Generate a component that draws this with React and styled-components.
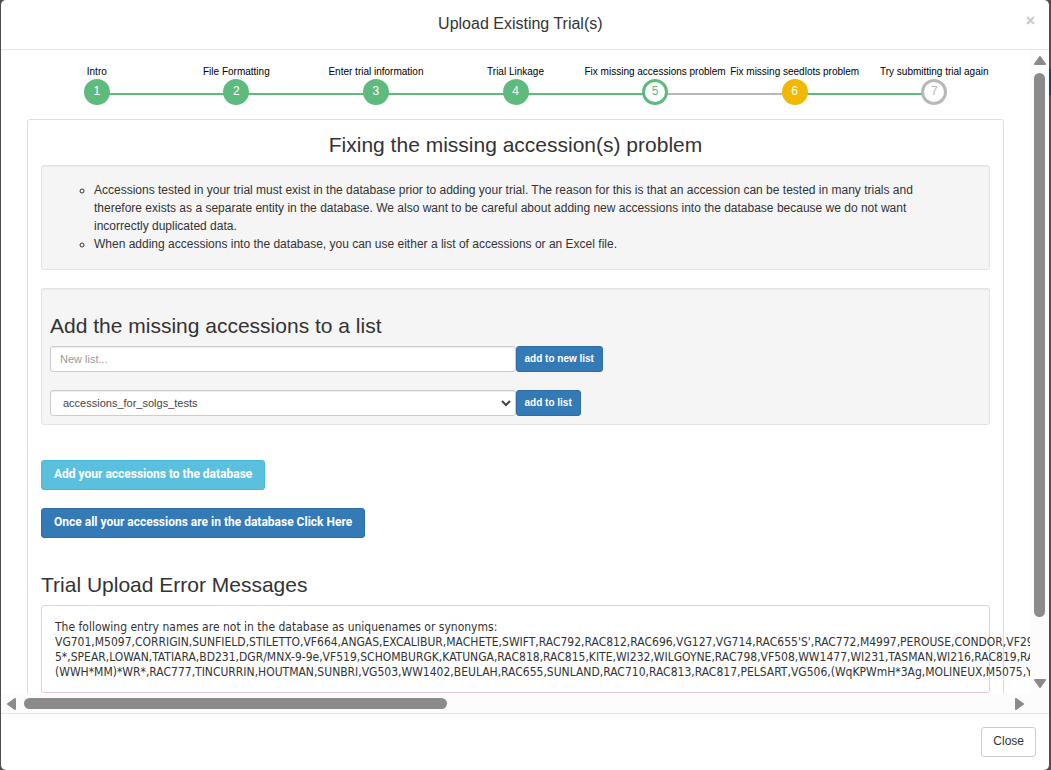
import React, { useId } from "react";
import styled, { createGlobalStyle } from "styled-components";

const GlobalStyle = createGlobalStyle`
  *, *::before, *::after { box-sizing: border-box; }
  body {
    margin: 0;
    background: #505052;
    color: #333;
    font: 12px/18px "Liberation Sans", Arial, sans-serif;
  }
`;

const Backdrop = styled.div`
  display: flex;
  height: 100vh;
  padding: 0 2px 0 1px;
  background:
    linear-gradient(#0b4377, #0b4377) right 69px / 2px 26px no-repeat,
    #505052;
`;

const Dialog = styled.section`
  display: flex;
  flex: 1;
  flex-direction: column;
  min-width: 0;
  background: #fff;
  border-radius: 5px;
  overflow: hidden;
`;

const Header = styled.header`
  display: flex;
  align-items: center;
  height: 50px;
  padding: 0 14px 2px;
  border-bottom: 1px solid #e5e5e5;
`;

const Title = styled.h1`
  flex: 1;
  margin: 0;
  font-size: 16px;
  font-weight: 400;
  line-height: 24px;
  text-align: center;
`;

const Dismiss = styled.button`
  padding: 0 0 5px;
  border: 0;
  background: none;
  color: #c8c8c8;
  font: bold 16px/18px "Liberation Sans", Arial, sans-serif;
`;

const Body = styled.div`
  display: grid;
  flex: 1;
  grid-template: minmax(0, 1fr) 19px / minmax(0, 1fr) 19px;
  min-height: 0;
`;

const Viewport = styled.main`
  padding: 14px 26px;
  overflow: hidden;
`;

const Steps = styled.ol`
  display: flex;
  margin: 0 0 14px;
  padding: 0;
  list-style: none;
`;

const Step = styled.li`
  position: relative;
  display: flex;
  flex: 1 1 0;
  flex-direction: column;
  align-items: center;
  min-width: 0;
  color: #000;
  font-size: 10px;
  line-height: 15px;
  white-space: nowrap;

  &:not(:last-child)::after {
    content: "";
    position: absolute;
    top: 29px;
    left: 50%;
    width: 100%;
    height: 2px;
    background: ${(p) => p.$line};
  }
`;

const Bullet = styled.span`
  position: relative;
  z-index: 1;
  width: 26px;
  height: 26px;
  border: 3px solid ${(p) => p.$ring};
  border-radius: 50%;
  background: ${(p) => p.$fill};
  color: ${(p) => p.$ink};
  font-size: 12px;
  line-height: 18px;
  text-align: center;
`;

const Panel = styled.div`
  padding: 13px 13px 40px;
  border: 1px solid #ddd;
  border-radius: 3px;
`;

const Heading = styled.h2`
  margin: 0 0 8px;
  font-size: 21px;
  font-weight: 400;
  line-height: 24px;
  text-align: ${(p) => (p.$centered ? "center" : "left")};
`;

const Well = styled.div`
  margin-bottom: 18px;
  padding: ${(p) => p.$padding};
  border: 1px solid #e3e3e3;
  border-radius: 3px;
  background: #f5f5f5;
  box-shadow: inset 0 1px 1px rgba(0, 0, 0, 0.05);
`;

const Notes = styled.ul`
  margin: 0;
  padding: 0 34px;
  list-style: circle;
`;

const FieldRow = styled.div`
  display: flex;
  & + & { margin-top: 18px; }
`;

const Field = styled.div`
  position: relative;
  flex: 0 0 50%;
`;

const control = `
  display: block;
  width: 100%;
  height: 26px;
  border: 1px solid #ccc;
  border-radius: 3px;
  background: #fff;
  color: #444;
  font: 11px/16px "Liberation Sans", Arial, sans-serif;
  box-shadow: inset 0 1px 1px rgba(0, 0, 0, 0.075);
`;

const TextInput = styled.input`
  ${control}
  padding: 0 9px;
  &::placeholder { color: #999; opacity: 1; }
`;

const Select = styled.select`
  ${control}
  padding: 0 12px;
  appearance: none;
`;

const Chevron = styled.svg`
  position: absolute;
  top: 9px;
  right: 5px;
  width: 10px;
  height: 8px;
  pointer-events: none;
`;

const looks = {
  primary: { fill: "#337ab7", edge: "#2e6da4", ink: "#fff" },
  info: { fill: "#5bc0de", edge: "#46b8da", ink: "#fff" },
  plain: { fill: "#fff", edge: "#ccc", ink: "#333" },
};

const Button = styled.button`
  height: ${(p) => (p.$small ? 26 : 30)}px;
  padding: ${(p) => (p.$small ? "0 8px 1px" : p.$look === "plain" ? "0 11px 2px" : "0 12px 2px")};
  border: 1px solid ${(p) => looks[p.$look].edge};
  border-radius: 3px;
  background: ${(p) => looks[p.$look].fill};
  color: ${(p) => looks[p.$look].ink};
  font: ${(p) => (p.$look === "plain" ? 400 : 700)} ${(p) => (p.$small ? 10 : 12)}px/18px
    ${(p) => (p.$small || p.$look === "plain" ? '"Liberation Sans", Arial' : "Roboto, Arial")}, sans-serif;
  white-space: nowrap;
`;

const Actions = styled.div`
  display: flex;
  flex-direction: column;
  align-items: flex-start;
  gap: 18px;
  margin: 35px 0;
`;

const Messages = styled.pre`
  margin: 0;
  padding: 14px 13px 12px;
  border: 1px solid #ebccd1;
  border-radius: 3px;
  font: 12px/15px "DejaVu Sans Condensed", Tahoma, sans-serif;
`;

const Bar = styled.div`
  display: flex;
  flex-direction: ${(p) => (p.$vertical ? "column" : "row")};
  align-items: center;
  gap: 8px;
  padding: ${(p) => (p.$vertical ? "6px 0" : "0 6px")};
  background: #fcfcfc;
`;

const Track = styled.div`
  display: flex;
  flex: 1;
  flex-direction: inherit;
  align-self: stretch;
  justify-content: flex-start;
  padding: ${(p) => (p.$vertical ? "0 4px" : "4px 0")};
`;

const Thumb = styled.div`
  flex: 0 0 ${(p) => p.$share}%;
  border-radius: 6px;
  background: #8b8b8b;
`;

const Arrow = styled.svg`
  flex: none;
  fill: #8b8b8b;
  stroke: #8b8b8b;
  stroke-width: 2;
  stroke-linejoin: round;
`;

const Footer = styled.footer`
  display: flex;
  justify-content: flex-end;
  height: 57px;
  padding: 13px;
  border-top: 1px solid #e5e5e5;
`;

const GREEN = "#5fba7d";
const GREY = "#b8b8b8";
const AMBER = "#f0b800";
const done = { fill: GREEN, ring: GREEN, ink: "#fff", line: GREEN };

const steps = [
  { label: "Intro", ...done },
  { label: "File Formatting", ...done },
  { label: "Enter trial information", ...done },
  { label: "Trial Linkage", ...done },
  { label: "Fix missing accessions problem", fill: "#fff", ring: GREEN, ink: GREEN, line: GREY },
  { label: "Fix missing seedlots problem", fill: AMBER, ring: AMBER, ink: "#fff", line: GREEN },
  { label: "Try submitting trial again", fill: "#fff", ring: GREY, ink: GREY, line: GREY },
];

const errorText = `The following entry names are not in the database as uniquenames or synonyms:
VG701,M5097,CORRIGIN,SUNFIELD,STILETTO,VF664,ANGAS,EXCALIBUR,MACHETE,SWIFT,RAC792,RAC812,RAC696,VG127,VG714,RAC655'S',RAC772,M4997,PEROUSE,CONDOR,VF299
5*,SPEAR,LOWAN,TATIARA,BD231,DGR/MNX-9-9e,VF519,SCHOMBURGK,KATUNGA,RAC818,RAC815,KITE,WI232,WILGOYNE,RAC798,VF508,WW1477,WI231,TASMAN,WI216,RAC819,RAC
(WWH*MM)*WR*,RAC777,TINCURRIN,HOUTMAN,SUNBRI,VG503,WW1402,BEULAH,RAC655,SUNLAND,RAC710,RAC813,RAC817,PELSART,VG506,(WqKPWmH*3Ag,MOLINEUX,M5075,YY`;

function ArrowIcon({ points, vertical }) {
  const [w, h] = vertical ? [12, 9] : [9, 12];
  return (
    <Arrow width={w} height={h} viewBox={`0 0 ${w} ${h}`} aria-hidden="true">
      <polygon points={points} />
    </Arrow>
  );
}

export default function App() {
  const titleId = useId();
  return (
    <>
      <GlobalStyle />
      <Backdrop>
        <Dialog role="dialog" aria-labelledby={titleId}>
          <Header>
            <Title id={titleId}>Upload Existing Trial(s)</Title>
            <Dismiss type="button" aria-label="Close dialog">×</Dismiss>
          </Header>
          <Body>
            <Viewport>
              <Steps>
                {steps.map((s, i) => (
                  <Step key={s.label} $line={s.line}>
                    {s.label}
                    <Bullet $fill={s.fill} $ring={s.ring} $ink={s.ink}>{i + 1}</Bullet>
                  </Step>
                ))}
              </Steps>
              <Panel>
                <Heading $centered>Fixing the missing accession(s) problem</Heading>
                <Well $padding="15px 18px 16px">
                  <Notes>
                    <li>
                      Accessions tested in your trial must exist in the database prior to adding your trial. The reason
                      for this is that an accession can be tested in many trials and therefore exists as a separate
                      entity in the database. We also want to be careful about adding new accessions into the database
                      because we do not want incorrectly duplicated data.
                    </li>
                    <li>
                      When adding accessions into the database, you can use either a list of accessions or an Excel
                      file.
                    </li>
                  </Notes>
                </Well>
                <Well $padding="25px 8px 8px">
                  <Heading>Add the missing accessions to a list</Heading>
                  <FieldRow>
                    <Field>
                      <TextInput type="text" placeholder="New list..." aria-label="New list name" />
                    </Field>
                    <Button type="button" $small $look="primary">add to new list</Button>
                  </FieldRow>
                  <FieldRow>
                    <Field>
                      <Select aria-label="Existing list">
                        <option>accessions_for_solgs_tests</option>
                      </Select>
                      <Chevron viewBox="0 0 10 8" fill="none" stroke="#444" strokeWidth="2" aria-hidden="true">
                        <path d="M1 2l4 4 4-4" />
                      </Chevron>
                    </Field>
                    <Button type="button" $small $look="primary">add to list</Button>
                  </FieldRow>
                </Well>
                <Actions>
                  <Button type="button" $look="info">Add your accessions to the database</Button>
                  <Button type="button" $look="primary">Once all your accessions are in the database Click Here</Button>
                </Actions>
                <Heading>Trial Upload Error Messages</Heading>
                <Messages>{errorText}</Messages>
              </Panel>
            </Viewport>
            <Bar $vertical>
              <ArrowIcon vertical points="1,8 6,1 11,8" />
              <Track $vertical>
                <Thumb $share={91} />
              </Track>
              <ArrowIcon vertical points="1,1 6,8 11,1" />
            </Bar>
            <Bar>
              <ArrowIcon points="8,1 1,6 8,11" />
              <Track>
                <Thumb $share={43} />
              </Track>
              <ArrowIcon points="1,1 8,6 1,11" />
            </Bar>
            <Bar aria-hidden="true" />
          </Body>
          <Footer>
            <Button type="button" $look="plain">Close</Button>
          </Footer>
        </Dialog>
      </Backdrop>
    </>
  );
}
